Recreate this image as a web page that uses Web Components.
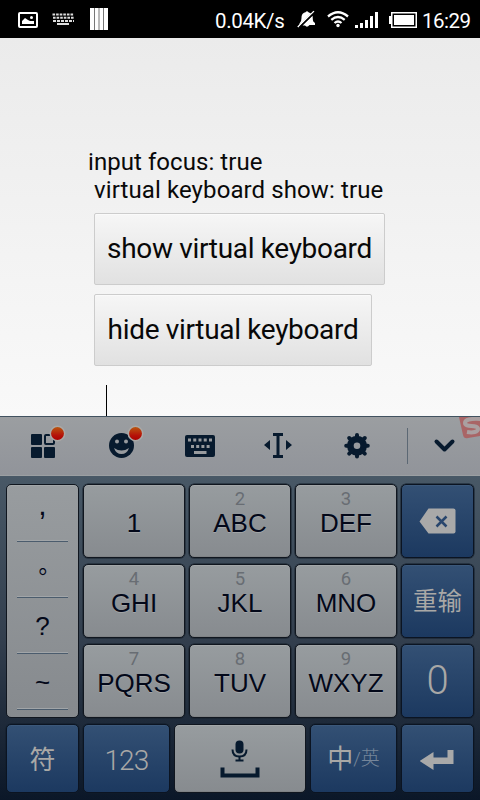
<!DOCTYPE html>
<html lang="zh"><head><meta charset="utf-8"><title>Virtual keyboard</title>
<style>html,body{margin:0;width:480px;height:800px;overflow:hidden;background:#000}</style></head>
<body><phone-screen></phone-screen>
<script>
const define = (name, html) => {
  const t = document.createElement('template');
  t.innerHTML = html;
  customElements.define(name, class extends HTMLElement {
    constructor() { super(); this.attachShadow({mode:'open'}).append(t.content.cloneNode(true)); }
  });
};

define('status-bar', `<style>
:host{display:flex;align-items:center;box-sizing:border-box;height:38px;padding:0 9px 0 17px;background:#000;color:#fff;font:20.5px/38px Roboto,sans-serif;letter-spacing:-.35px}
svg{display:block;flex:none}.speed{margin-left:107px;width:70px;white-space:nowrap;padding-top:3px}.time{margin-left:4px;padding-top:3px;white-space:nowrap;letter-spacing:-.5px}
</style>
<svg width="91" height="38" viewBox="17 0 91 38"><rect x="19" y="13" width="18" height="14" rx="1" fill="none" stroke="#fff" stroke-width="2"/><path d="M22 24v-3l3-3 3 2 2 1h4v3z" fill="#fff"/><circle cx="31.5" cy="17.5" r="1.5" fill="#fff"/>
<g stroke="#ddd" stroke-width="2" fill="none"><path d="M52.500 14.500H74" stroke-dasharray="2.600 1"/><path d="M53 17.800H74" stroke-dasharray="2.600 1"/><path d="M53 21H74" stroke-dasharray="3 1"/><path d="M57 24h12"/></g>
<path d="M90 8h18v22H90z" fill="#fff"/><path d="M94.500 8v22M99 8v22M103.500 8v22" stroke="#777" stroke-width="1"/></svg>
<span class="speed">0.04K/s</span>
<svg style="margin-left:12px" width="121" height="38" viewBox="297 0 121 38"><path d="M299.500 23.500q2-1.500 2-5.500c0-4 2-5.500 4-5.800q1.500-2 3 0l2.500 1.300L299.500 25zM302.500 25.500L312.500 15.800c.6 3.200-.3 5.700 2.500 7.200V25h-5.500q-2.500 3-4.500.5z" fill="#fff"/><path d="M297.800 27L314 11.200" stroke="#fff" stroke-width="1.500"/><path d="M299.500 27.200L315 12" stroke="#000" stroke-width="1.200"/>
<g fill="none" stroke="#fff" stroke-width="2.300"><path d="M328 16.500q10-8.500 20 0M331.300 19.800q6.700-5.600 13.400 0M334.500 23q3.500-3 7 0"/></g><circle cx="338" cy="25.500" r="1.700" fill="#fff"/>
<g fill="#fff"><path d="M355 25h3v3h-3zM360 23h3v5h-3zM365 20h3v8h-3zM370 16h3v12h-3zM375 12h3v16h-3z"/><path d="M389 16h2v8h-2zM394 15h20v10h-20z"/></g><rect x="391.750" y="12.750" width="24.500" height="14.500" fill="none" stroke="#fff" stroke-width="1.500"/></svg>
<span class="time">16:29</span>`);

define('focus-note', `<style>:host{display:block;font:24px/28px Roboto,sans-serif;color:#090909;white-space:pre}div{height:28px}.a{margin-left:-1px;letter-spacing:.06px}.b{padding-left:5px;letter-spacing:.1px}</style><div class="a"><slot name="focus"></slot></div><div class="b"><slot name="show"></slot></div>`);

define('push-button', `<style>:host{display:block;box-sizing:border-box;width:var(--w);height:72px;border:1px solid #ccc;border-radius:2px;background:linear-gradient(#f6f6f6,#e1e1e1);box-shadow:inset 0 1px #fafafa;font:28px/70px Roboto,sans-serif;letter-spacing:-.33px;text-align:center;color:#080808;white-space:nowrap}</style><slot></slot>`);

define('demo-form', `<style>:host{display:flex;flex-direction:column;align-items:flex-start;box-sizing:border-box;height:378px;padding:110px 0 0 89px;background:linear-gradient(#ebebeb,#f9f9f9)}push-button{margin-left:5px}.first{margin-top:9px}.second{margin-top:9px}.caret{width:1px;height:31px;background:#000;margin:19px 0 0 17px}</style>
<focus-note><span slot="focus">input focus: true</span><span slot="show">virtual keyboard show: true</span></focus-note>
<push-button class="first" style="--w:291px">show virtual keyboard</push-button><push-button class="second" style="--w:278px">hide virtual keyboard</push-button><div class="caret"></div>`);

define('tool-bar', `<style>:host{display:block;box-sizing:border-box;height:60px;border-top:1px solid #415260;border-bottom:1px solid #9b9fa2;background:linear-gradient(#9b9ea1,#91949a)}svg{display:block}</style>
<svg width="480" height="58" viewBox="0 417 480 58"><defs><linearGradient id="r" x2="0" y2="1"><stop stop-color="#b95c10"/><stop offset=".65" stop-color="#b51008"/><stop offset="1" stop-color="#a90000"/></linearGradient></defs>
<g fill="#071a2e"><rect x="31" y="434" width="11" height="11" rx="1"/><rect x="31" y="447" width="11" height="11" rx="1"/><rect x="44" y="447" width="11" height="11" rx="1"/></g><rect x="45" y="435" width="9" height="9" rx="1" fill="none" stroke="#071a2e" stroke-width="2"/>
<circle cx="121.500" cy="445.500" r="12.500" fill="#071a2e"/><circle cx="117" cy="441.500" r="2" fill="#979a9e"/><circle cx="126" cy="441.500" r="2" fill="#979a9e"/><path d="M114 448q7.500 5 15 0-2 6-7.500 6t-7.500-6z" fill="#979a9e"/>
<g fill="url(#r)" stroke="#aaa9a7" stroke-width="1.500"><circle cx="57.500" cy="433.500" r="7.200"/><circle cx="135.500" cy="433.500" r="7.200"/></g>
<rect x="185" y="435" width="30" height="22" rx="2" fill="#071a2e"/><path d="M188 440h24" stroke="#979a9e" stroke-width="3" stroke-dasharray="3 2.250"/><path d="M191 446.500h19" stroke="#979a9e" stroke-width="3" stroke-dasharray="3 2.200"/><path d="M194 452.500h12.500" stroke="#979a9e" stroke-width="3"/>
<path d="M273 433h10v3h-3.500v19h3.500v3h-10v-3h3.500v-19H273zM270 440v10l-6-5zM286 440v10l6-5z" fill="#071a2e"/>
<g fill="#071a2e"><circle cx="357" cy="445.800" r="10"/><g stroke="#071a2e" stroke-width="4" stroke-linecap="round"><path d="M357 435v21.600M346.200 445.800h21.600M349.200 438l15.600 15.600M349.200 453.600l15.600-15.600"/></g></g><circle cx="357" cy="445.800" r="3.300" fill="#979a9e"/>
<path d="M407.500 428v36" stroke="#5c6874"/><path d="M436.500 441.500l8 8 8-8" fill="none" stroke="#071a2e" stroke-width="4" stroke-linecap="round" stroke-linejoin="round"/>
<path d="M459 417h21v19l-12 2q-4 1-5-3z" fill="#a96566"/><path d="M481 419q-16-1-16 4c0 5 13 1 13 6 0 3-5 4-11 3" fill="none" stroke="#aaa0a1" stroke-width="4"/></svg>`);

define('letter-key', `<style>:host{display:block;box-sizing:border-box;min-width:0;height:100%;border:1px solid #10161f;border-radius:5px;background:linear-gradient(#979c9f,#878b8f);box-shadow:inset 0 1px #a3a7a9,inset 0 -1px #7f8285,0 0 0 .5px #17202b;color:#030819;text-align:center;font:26px/26px "Liberation Sans",Arial,sans-serif;text-shadow:0 1px #a2a5a7}
small{display:block;height:25px;padding-top:4px;box-sizing:border-box;font:18.500px/20px Roboto,sans-serif;color:#686d73;text-shadow:none}</style><small><slot name="digit"></slot></small><slot></slot>`);

define('blue-key', `<style>:host{display:flex;align-items:center;justify-content:center;box-sizing:border-box;min-width:0;height:100%;border:1px solid #0b1422;border-radius:5px;background:linear-gradient(#335074,#1c3960);box-shadow:inset 0 1px #3b587a,0 0 0 .5px #111d2b;color:#a9a8a6;white-space:nowrap;font:300 28px/1 Roboto,"Noto Sans CJK SC",sans-serif}</style><slot></slot>`);

define('punctuation-strip', `<style>:host{display:grid;grid-template-rows:57px 56px 56px 56px 1fr;box-sizing:border-box;border:1px solid #10161f;border-radius:5px;padding:0 10px;background:linear-gradient(#989c9f,#868a8e);color:#030819;font:26px/56px "Liberation Sans",Arial,sans-serif;text-align:center;box-shadow:inset 0 1px #a3a7a9}
span{border-bottom:1px solid #4b5c6d;box-shadow:inset 0 -1px #a1a5a8;box-sizing:border-box;height:100%}</style>
<span style="font-size:30px;line-height:39px">,</span><span style="font:22px/42px 'Noto Sans CJK SC',sans-serif;padding-left:14px">。</span><span>?</span><span>~</span><i></i>`);

define('key-pad', `<style>:host{display:flex;flex-direction:column;gap:6px;box-sizing:border-box;height:324px;padding:8px 6px 7px;background:linear-gradient(#485866,#333f4e 50%,#0b1728)}
.main{display:grid;grid-template-columns:73px 102px 102px 102px 73px;grid-template-rows:repeat(3,74px);gap:6px 4px}punctuation-strip{grid-row:1/4}.bottom{display:grid;grid-template-columns:73px 87px 132px 87px 73px;gap:4px;height:69px}svg{display:block}</style>
<div class="main"><punctuation-strip></punctuation-strip>
<letter-key>1</letter-key><letter-key><span slot="digit">2</span>ABC</letter-key><letter-key><span slot="digit">3</span>DEF</letter-key>
<blue-key><svg width="37" height="26" viewBox="0.500 -0.500 37 26"><path d="M10 0h25q2 0 2 2v21q0 2-2 2H10L1 13z" fill="#a9a9a9"/><path d="M18 8l10 10M28 8L18 18" stroke="#29466d" stroke-width="2.500"/></svg></blue-key>
<letter-key><span slot="digit">4</span>GHI</letter-key><letter-key><span slot="digit">5</span>JKL</letter-key><letter-key><span slot="digit">6</span>MNO</letter-key><blue-key style="font-size:24.500px;font-weight:400;padding-top:3px">重输</blue-key>
<letter-key><span slot="digit">7</span>PQRS</letter-key><letter-key><span slot="digit">8</span>TUV</letter-key><letter-key><span slot="digit">9</span>WXYZ</letter-key><blue-key style="font-size:40px">0</blue-key></div>
<div class="bottom"><blue-key style="font-size:26px;font-weight:400;padding-top:3px">符</blue-key><blue-key style="letter-spacing:-.8px;padding-top:4px">123</blue-key>
<voice-key></voice-key>
<blue-key><span style="font-size:26px;font-weight:400">中</span><span style="font-size:19px;color:#76869a">/英</span></blue-key>
<blue-key><svg width="35" height="22" viewBox="0.500 -1 35 22"><path d="M0 12L14 3v5.500h14V1h6v14H14v6z" fill="#a9a9a9"/></svg></blue-key></div>`);

define('voice-key', `<style>:host{display:flex;align-items:center;justify-content:center;box-sizing:border-box;border:1px solid #10161f;border-radius:5px;background:linear-gradient(#979c9f,#878b8f);box-shadow:inset 0 1px #a3a7a9,inset 0 -1px #7f8285}svg{display:block}</style>
<svg width="42" height="38" viewBox="219.500 739.500 42 38"><g fill="#071a2e"><rect x="236" y="740" width="8" height="13" rx="4"/><path d="M221 767h4v6h31v-6h4v10h-39zM236 759h8v2h-8zM239 756h2v4h-2z"/></g><path d="M233 749q0 7 7 7t7-7" fill="none" stroke="#071a2e" stroke-width="2"/></svg>`);

define('phone-screen', `<style>:host{display:flex;flex-direction:column;width:480px;height:800px;overflow:hidden}</style><status-bar></status-bar><demo-form></demo-form><tool-bar></tool-bar><key-pad></key-pad>`);
</script></body></html>
